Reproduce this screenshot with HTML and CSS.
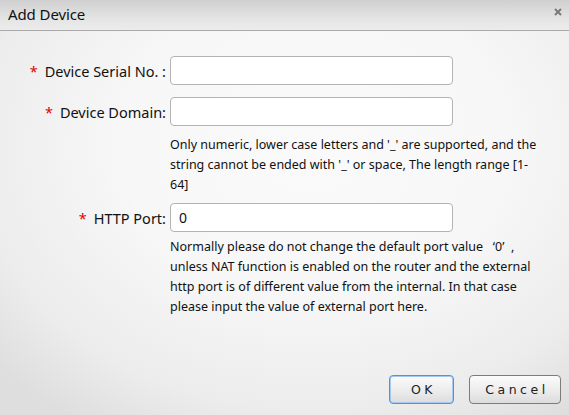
FILE: index.html
```html
<!DOCTYPE html>
<html>
<head>
<meta charset="utf-8">
<link rel="stylesheet" href="styles.css">
</head>
<body>
<div class="dialog">
  <div class="header">
    <span class="title">Add Device</span>
    <svg class="close" width="8" height="8" viewBox="0 0 8 8"><path d="M1 1 L7 7 M7 1 L1 7" stroke="#7a7a7a" stroke-width="2" fill="none"/></svg>
  </div>
  <div class="content">
    <div class="row">
      <label class="label"><span class="req">*</span>Device Serial No. :</label>
      <input class="field" type="text" value="">
    </div>
    <div class="row">
      <label class="label"><span class="req">*</span>Device Domain:</label>
      <input class="field" type="text" value="">
    </div>
    <div class="help help1">Only numeric, lower case letters and '_' are supported, and the string cannot be ended with '_' or space, The length range [1-64]</div>
    <div class="row">
      <label class="label"><span class="req">*</span>HTTP Port:</label>
      <input class="field" type="text" value="0">
    </div>
    <div class="help help2">Normally please do not change the default port value &nbsp;&nbsp;‘0’ &nbsp;, unless NAT function is enabled on the router and the external http port is of different value from the internal. In that case please input the value of external port here.</div>
  </div>
  <div class="footer">
    <button class="btn ok">OK</button>
    <button class="btn cancel">Cancel</button>
  </div>
</div>
</body>
</html>
```
FILE: styles.css
```css
html, body {
  margin: 0;
  padding: 0;
}
body {
  width: 569px;
  height: 415px;
  overflow: hidden;
  font-family: "Noto Sans", "Open Sans", sans-serif;
  color: #111;
}
.dialog {
  width: 569px;
  height: 415px;
  display: flex;
  flex-direction: column;
  background:
    radial-gradient(ellipse 75% 80% at 55% 35%, #fafafa 0%, #f7f7f7 45%, #ececec 80%, #dedede 100%);
}
.header {
  height: 31px;
  box-sizing: border-box;
  border-bottom: 1px solid #a9a9a9;
  background: linear-gradient(to bottom, #cfcfcf 0%, #e4e4e4 60%, #ececec 100%);
  display: flex;
  align-items: center;
  justify-content: space-between;
  padding: 0 7px 2px 8px;
}
.title {
  font-size: 15px;
  color: #111;
  letter-spacing: -0.1px;
}
.close {
  display: block;
  margin-top: -4px;
}
.content {
  flex: 1;
  padding-top: 25px;
}
.row {
  display: flex;
  align-items: center;
  height: 29px;
  margin-bottom: 12px;
}
.label {
  width: 166px;
  text-align: right;
  font-size: 14.5px;
  padding-right: 4px;
  white-space: nowrap;
}
.req {
  color: #e00000;
  margin-right: 7px;
}
.field {
  width: 283px;
  height: 29px;
  box-sizing: border-box;
  border: 1px solid #b4b4b4;
  border-radius: 4px;
  background: #fff;
  font-family: inherit;
  font-size: 14px;
  padding: 0 0 0 8px;
  color: #111;
  outline: none;
}
.help {
  margin-left: 170px;
  width: 372px;
  font-size: 12.5px;
  line-height: 20px;
  color: #111;
}
.help1 {
  margin-top: -3px;
  margin-bottom: 8px;
}
.help2 {
  margin-top: -7px;
}
.footer {
  display: flex;
  justify-content: flex-end;
  gap: 15px;
  padding: 0 8px 11px 0;
}
.btn {
  flex: none;
  box-sizing: border-box;
  height: 29px;
  border: 1px solid #7c7c7c;
  border-radius: 4px;
  background: linear-gradient(to bottom, #fbfbfb 0%, #ececec 55%, #dcdcdc 100%);
  font-family: "DejaVu Sans", sans-serif;
  font-size: 12.5px;
  letter-spacing: 3.5px;
  color: #222;
  padding: 0 0 0 4px;
}
.btn.ok {
  width: 65px;
  border: 1px solid #5b8fd8;
  box-shadow: inset 0 0 0 1px #a9c8f0;
}
.btn.cancel {
  width: 92px;
}
```
